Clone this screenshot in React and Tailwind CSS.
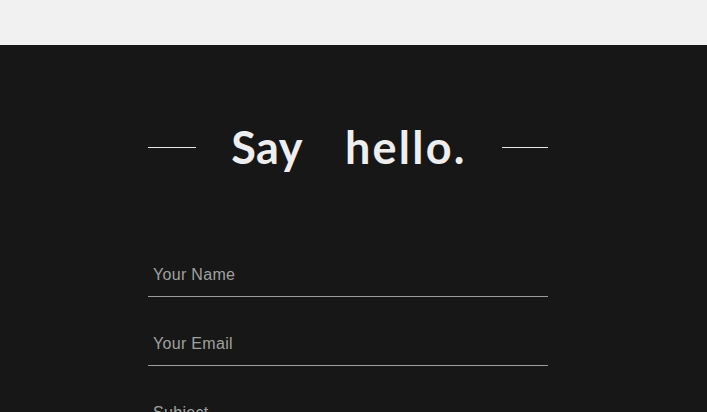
export default function App() {
  const fields = ['Your Name', 'Your Email', 'Subject']

  return (
    <div className="min-h-screen bg-[#171717] font-['Liberation_Sans',sans-serif]">
      <div className="h-[45px] bg-[#f1f1f1]" />

      <section className="pr-[11px]">
        <div className="mx-auto w-[400px]">
          {/* heading */}
          <div className="flex items-center justify-between pt-[74px]">
            <span className="h-px w-12 bg-[#e5e5e5]" />
            <h2 className="flex gap-[42px] font-['Lato',sans-serif] text-[45px] leading-[56px] font-bold text-[#eeeeee]">
              <span className="tracking-[0.01em]">Say</span>
              <span className="tracking-[0.05em]">hello.</span>
            </h2>
            <span className="h-px w-[46px] bg-[#e5e5e5]" />
          </div>

          {/* form */}
          <form className="mt-[78px] flex flex-col gap-[25px]">
            {fields.map(f => (
              <input
                key={f}
                type="text"
                placeholder={f}
                className="h-[44px] w-full border-b border-[#9b9b9b] bg-transparent px-[5px] text-[16px] tracking-[0.02em] text-[#ddd] placeholder:text-[#a0a0a0] outline-none"
              />
            ))}
          </form>
        </div>
      </section>
    </div>
  )
}
